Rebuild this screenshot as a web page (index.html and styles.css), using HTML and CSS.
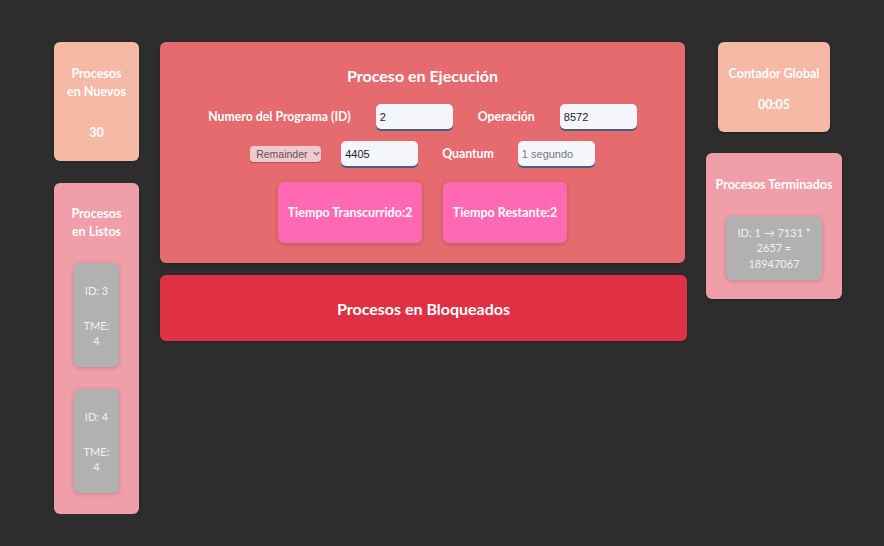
FILE: index.html
```html
<!DOCTYPE html>
<html lang="es">
<head>
<meta charset="utf-8">
<title>Simulador de Procesos</title>
<link rel="stylesheet" href="styles.css">
</head>
<body>
<div class="layout">
  <div class="col col-left">
    <div class="card card-new">
      <h3 class="card-title">Procesos en Nuevos</h3>
      <div class="card-value">30</div>
    </div>
    <div class="card card-ready">
      <h3 class="card-title">Procesos en Listos</h3>
      <div class="item item-ready">
        <p>ID: 3</p>
        <p>TME: 4</p>
      </div>
      <div class="item item-ready">
        <p>ID: 4</p>
        <p>TME: 4</p>
      </div>
    </div>
  </div>

  <div class="col col-center">
    <div class="exec">
      <h2 class="exec-title">Proceso en Ejecución</h2>
      <div class="exec-row row1">
        <span class="lbl">Numero del Programa (ID)</span>
        <input class="field" type="text" value="2">
        <span class="lbl">Operación</span>
        <input class="field" type="text" value="8572">
      </div>
      <div class="exec-row row2">
        <div class="select">Remainder <svg class="chev" viewBox="0 0 8 5" width="7" height="5"><path d="M1 1l3 3 3-3" fill="none" stroke="#555" stroke-width="1.2"/></svg></div>
        <input class="field" type="text" value="4405">
        <span class="lbl">Quantum</span>
        <input class="field" type="text" placeholder="1 segundo">
      </div>
      <div class="exec-row row3">
        <div class="time-box">Tiempo Transcurrido:2</div>
        <div class="time-box">Tiempo Restante:2</div>
      </div>
    </div>
    <div class="blocked">
      <h2 class="blocked-title">Procesos en Bloqueados</h2>
    </div>
  </div>

  <div class="col col-right">
    <div class="card card-clock">
      <h3 class="card-title">Contador Global</h3>
      <div class="card-value">00:05</div>
    </div>
    <div class="card card-done">
      <h3 class="card-title">Procesos Terminados</h3>
      <div class="item item-done">ID: 1 → 7131 * 2657 = 18947067</div>
    </div>
  </div>
</div>
</body>
</html>
```

FILE: styles.css
```css
* { box-sizing: border-box; }

html, body {
  margin: 0;
  padding: 0;
  background: #2d2d2d;
  font-family: Lato, "Open Sans", sans-serif;
  color: #fff;
}

.layout {
  display: flex;
  align-items: flex-start;
  padding: 42px 0 0 54px;
}

.col {
  display: flex;
  flex-direction: column;
}

.col-left {
  width: 85px;
  gap: 22px;
}

.col-center {
  width: 527px;
  margin-left: 21px;
  gap: 12px;
}

.col-right {
  width: 136px;
  margin-left: 19px;
  gap: 21px;
  align-items: center;
}

.card {
  border-radius: 6px;
  box-shadow: 0 1px 3px rgba(0,0,0,0.25);
  text-align: center;
  display: flex;
  flex-direction: column;
  align-items: center;
}

.card-title {
  margin: 0;
  font-size: 12.5px;
  font-weight: 700;
  line-height: 17.5px;
}

.card-value {
  font-size: 12.5px;
  font-weight: 700;
  line-height: 17px;
}

.card-new {
  background: #f5b9a6;
  height: 119px;
  padding: 23px 10px 0;
  width: 85px;
}
.card-new .card-value { margin-top: 24px; }

.card-ready {
  background: #f09ea8;
  height: 331px;
  padding: 22px 10px 0;
  width: 85px;
}

.item {
  background: #b1b1b1;
  color: #f1f1f1;
  border-radius: 6px;
  box-shadow: 0 1px 4px rgba(0,0,0,0.18);
  font-size: 11px;
  line-height: 15px;
}

.item-ready {
  width: 45px;
  height: 104px;
  padding: 20px 8px;
  margin-top: 23px;
  flex-shrink: 0;
}
.item-ready + .item-ready { margin-top: 22px; }
.item-ready p { margin: 0; }
.item-ready p + p { margin-top: 20px; }

.card-clock {
  background: #f5b9a6;
  width: 112px;
  height: 90px;
  padding-top: 23px;
}
.card-clock .card-value { margin-top: 13px; }

.card-done {
  background: #f09ea8;
  width: 136px;
  height: 146px;
  padding-top: 23px;
}

.item-done {
  width: 96px;
  height: 64px;
  margin-top: 22px;
  padding: 9px 9px;
  line-height: 15.5px;
}

.exec {
  background: #e56b6f;
  width: 525px;
  height: 221px;
  border-radius: 6px;
  box-shadow: 0 1px 3px rgba(0,0,0,0.25);
  padding-top: 24px;
  display: flex;
  flex-direction: column;
  align-items: center;
}

.exec-title {
  margin: 0;
  font-size: 16px;
  font-weight: 700;
  line-height: 20px;
}

.exec-row {
  display: flex;
  align-items: center;
  justify-content: center;
}

.row1 { margin-top: 18px; gap: 25px; }
.row2 { margin-top: 12px; gap: 24px; }
.row3 { margin-top: 16px; gap: 21px; }

.lbl {
  font-size: 12.3px;
  font-weight: 700;
  white-space: nowrap;
}

.field {
  width: 77px;
  height: 25px;
  border: none;
  border-radius: 5px;
  background: #f4f6fb;
  box-shadow: 0 2px 0 #44607e;
  font-family: "Liberation Sans", Arial, sans-serif;
  font-size: 11px;
  color: #222;
  padding: 0 0 0 4px;
  outline: none;
}
.field::placeholder { color: #777; }

.select {
  width: 71px;
  height: 16px;
  border-radius: 4px;
  background: #f2c9cd;
  box-shadow: 0 1px 1px rgba(0,0,0,0.25);
  font-family: "Liberation Sans", Arial, sans-serif;
  font-size: 10.5px;
  color: #555;
  display: flex;
  align-items: center;
  padding-left: 6px;
  gap: 5px;
}
.row2 .select { margin-right: -4px; }

.time-box {
  background: #ff69b4;
  height: 61px;
  border-radius: 6px;
  box-shadow: 0 1px 4px rgba(0,0,0,0.2);
  display: flex;
  align-items: center;
  justify-content: center;
  font-size: 12.5px;
  font-weight: 700;
  padding: 0 10px;
  white-space: nowrap;
}
.time-box:first-child { width: 144px; }
.time-box:last-child { width: 124px; }

.blocked {
  background: #df3044;
  height: 66px;
  border-radius: 6px;
  box-shadow: 0 1px 3px rgba(0,0,0,0.25);
  display: flex;
  align-items: center;
  justify-content: center;
}

.blocked-title {
  margin: 0;
  font-size: 16px;
  font-weight: 700;
}
```
